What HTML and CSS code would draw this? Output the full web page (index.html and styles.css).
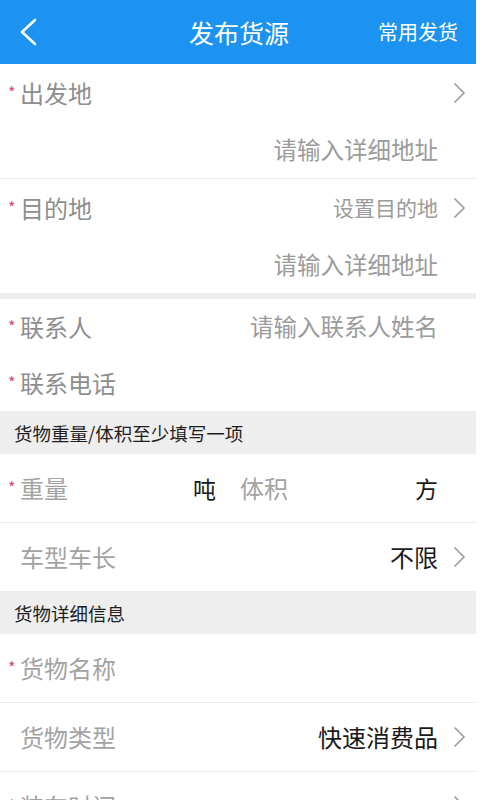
FILE: index.html
```html
<!DOCTYPE html>
<html lang="zh-CN">
<head>
<meta charset="utf-8">
<title>发布货源</title>
<link rel="stylesheet" href="styles.css">
</head>
<body>
<div class="app">
  <header class="header">
    <div class="back">
      <svg width="20" height="28" viewBox="0 0 20 28"><path d="M17 2 L4 14 L17 26" fill="none" stroke="#fff" stroke-width="2.6" stroke-linecap="round" stroke-linejoin="round"/></svg>
    </div>
    <div class="title">发布货源</div>
    <div class="action">常用发货</div>
  </header>

  <section class="block">
    <div class="row r57">
      <span class="req">*</span><span class="label">出发地</span>
      <span class="value"></span>
      <span class="arrow"><svg width="13" height="22" viewBox="0 0 13 22"><path d="M1.5 1.5 L11 11 L1.5 20.5" fill="none" stroke="#9a9a9a" stroke-width="1.6"/></svg></span>
    </div>
    <div class="row r57">
      <span class="req"></span><span class="label"></span>
      <span class="value hint">请输入详细地址</span>
      <span class="arrow"></span>
    </div>
  </section>
  <div class="line"></div>
  <section class="block">
    <div class="row r57">
      <span class="req">*</span><span class="label">目的地</span>
      <span class="value hint small">设置目的地</span>
      <span class="arrow"><svg width="13" height="22" viewBox="0 0 13 22"><path d="M1.5 1.5 L11 11 L1.5 20.5" fill="none" stroke="#9a9a9a" stroke-width="1.6"/></svg></span>
    </div>
    <div class="row r57">
      <span class="req"></span><span class="label"></span>
      <span class="value hint">请输入详细地址</span>
      <span class="arrow"></span>
    </div>
  </section>
  <div class="gap"></div>
  <section class="block">
    <div class="row r56">
      <span class="req">*</span><span class="label">联系人</span>
      <span class="value hint">请输入联系人姓名</span>
      <span class="arrow"></span>
    </div>
    <div class="row r56">
      <span class="req">*</span><span class="label">联系电话</span>
      <span class="value"></span>
      <span class="arrow"></span>
    </div>
  </section>

  <div class="section-title">货物重量/体积至少填写一项</div>
  <div class="row r68">
    <span class="req">*</span><span class="label light">重量</span>
    <span class="unit unit-t">吨</span>
    <span class="label light vol">体积</span>
    <span class="unit unit-f">方</span>
    <span class="arrow"></span>
  </div>
  <div class="line"></div>
  <div class="row r68">
    <span class="req"></span><span class="label light">车型车长</span>
    <span class="value dark">不限</span>
    <span class="arrow"><svg width="13" height="22" viewBox="0 0 13 22"><path d="M1.5 1.5 L11 11 L1.5 20.5" fill="none" stroke="#9a9a9a" stroke-width="1.6"/></svg></span>
  </div>

  <div class="section-title">货物详细信息</div>
  <div class="row r68">
    <span class="req">*</span><span class="label light">货物名称</span>
    <span class="value"></span>
    <span class="arrow"></span>
  </div>
  <div class="line"></div>
  <div class="row r68">
    <span class="req"></span><span class="label light">货物类型</span>
    <span class="value dark">快速消费品</span>
    <span class="arrow"><svg width="13" height="22" viewBox="0 0 13 22"><path d="M1.5 1.5 L11 11 L1.5 20.5" fill="none" stroke="#9a9a9a" stroke-width="1.6"/></svg></span>
  </div>
  <div class="line"></div>
  <div class="row r68">
    <span class="req">*</span><span class="label light">装车时间</span>
    <span class="value"></span>
    <span class="arrow"><svg width="13" height="22" viewBox="0 0 13 22"><path d="M1.5 1.5 L11 11 L1.5 20.5" fill="none" stroke="#9a9a9a" stroke-width="1.6"/></svg></span>
  </div>
</div>
</body>
</html>
```

FILE: styles.css
```css
html, body {
  margin: 0;
  padding: 0;
  background: #ffffff;
}
body {
  font-family: "Noto Sans CJK SC", "Noto Sans", sans-serif;
  overflow: hidden;
  height: 800px;
}
.app {
  width: 476px;
  background: #ffffff;
}
.header {
  height: 64px;
  background: #1c93f1;
  display: grid;
  grid-template-columns: 1fr auto 1fr;
  align-items: center;
  color: #ffffff;
}
.back {
  padding-left: 18px;
  display: flex;
  align-items: center;
}
.title {
  font-size: 25px;
  line-height: 1;
  padding-left: 2px;
}
.action {
  justify-self: end;
  font-size: 20px;
  line-height: 1;
  padding-right: 18px;
}
.row {
  display: flex;
  align-items: center;
  padding-left: 8px;
  background: #ffffff;
}
.r57 { height: 57px; }
.r56 { height: 56px; }
.r68 { height: 68px; }
.req {
  width: 12px;
  color: #d2467a;
  font-size: 16px;
  align-self: center;
  margin-top: -2px;
  line-height: 1;
}
.label {
  font-size: 24px;
  color: #8e8e8e;
  line-height: 1;
}
.label.light { color: #a3a3a3; }
.value {
  flex: 1;
  text-align: right;
  font-size: 23.5px;
  line-height: 1;
}
.hint { color: #9b9b9b; }
.small { font-size: 21px; }
.dark { color: #1a1a1a; font-size: 24px; }
.arrow {
  width: 38px;
  display: flex;
  justify-content: flex-end;
  padding-right: 10px;
  box-sizing: border-box;
  align-items: center;
}
.unit {
  font-size: 23px;
  color: #1a1a1a;
  line-height: 1;
}
.unit-t { margin-left: 125px; }
.vol { margin-left: 24px; }
.unit-f { margin-left: auto; }
.line {
  height: 1px;
  background: #ececec;
}
.gap {
  height: 6px;
  background: #eeeeee;
}
.section-title {
  height: 43px;
  background: #eeeeee;
  display: flex;
  align-items: center;
  padding-left: 14px;
  font-size: 18.5px;
  color: #1e1e1e;
}
```
